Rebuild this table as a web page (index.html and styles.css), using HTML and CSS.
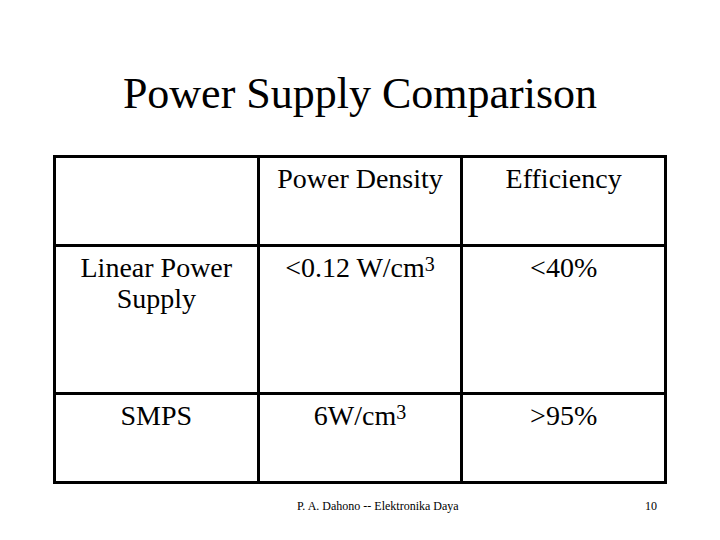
FILE: index.html
```html
<!DOCTYPE html>
<html lang="id">
<head>
    <meta charset="UTF-8">
    <meta name="viewport" content="width=device-width, initial-scale=1.0">
    <title>Power Supply Comparison</title>
    <link rel="stylesheet" href="styles.css">
</head>
<body>
    <div class="slide">
        <h1 class="title">Power Supply Comparison</h1>
        <table class="compare">
            <tr class="row-head">
                <td></td>
                <td>Power Density</td>
                <td>Efficiency</td>
            </tr>
            <tr class="row-linear">
                <td>Linear Power<br>Supply</td>
                <td>&lt;0.12 W/cm<sup>3</sup></td>
                <td>&lt;40%</td>
            </tr>
            <tr class="row-smps">
                <td>SMPS</td>
                <td>6W/cm<sup>3</sup></td>
                <td>&gt;95%</td>
            </tr>
        </table>
        <div class="footer">
            <span class="footer-text">P. A. Dahono -- Elektronika Daya</span>
            <span class="page-num">10</span>
        </div>
    </div>
</body>
</html>
```

FILE: styles.css
```css
body {
    margin: 0;
    background-color: white;
    font-family: "Liberation Serif", "Times New Roman", serif;
    color: black;
}
.slide {
    width: 720px;
    height: 540px;
    overflow: hidden;
}
.title {
    margin: 68px 0 0 0;
    font-size: 44px;
    font-weight: normal;
    text-align: center;
    line-height: normal;
}
.compare {
    margin: 36px 0 0 53px;
    width: 614px;
    border-collapse: collapse;
    table-layout: fixed;
    border: 3px solid black;
}
.compare td {
    border: 3px solid black;
    padding: 5px 4px 0 4px;
    vertical-align: top;
    text-align: center;
    font-size: 28px;
    line-height: 31px;
}
.compare sup {
    font-size: 20px;
    line-height: 0;
    vertical-align: 6px;
}
.row-head td {
    height: 81px;
}
.row-linear td {
    height: 140px;
}
.row-smps td {
    height: 81px;
}
.footer {
    display: flex;
    align-items: center;
    margin-top: 15px;
    font-size: 12px;
}
.footer-text {
    margin-left: 297px;
}
.page-num {
    margin-left: auto;
    margin-right: 63px;
}
```
